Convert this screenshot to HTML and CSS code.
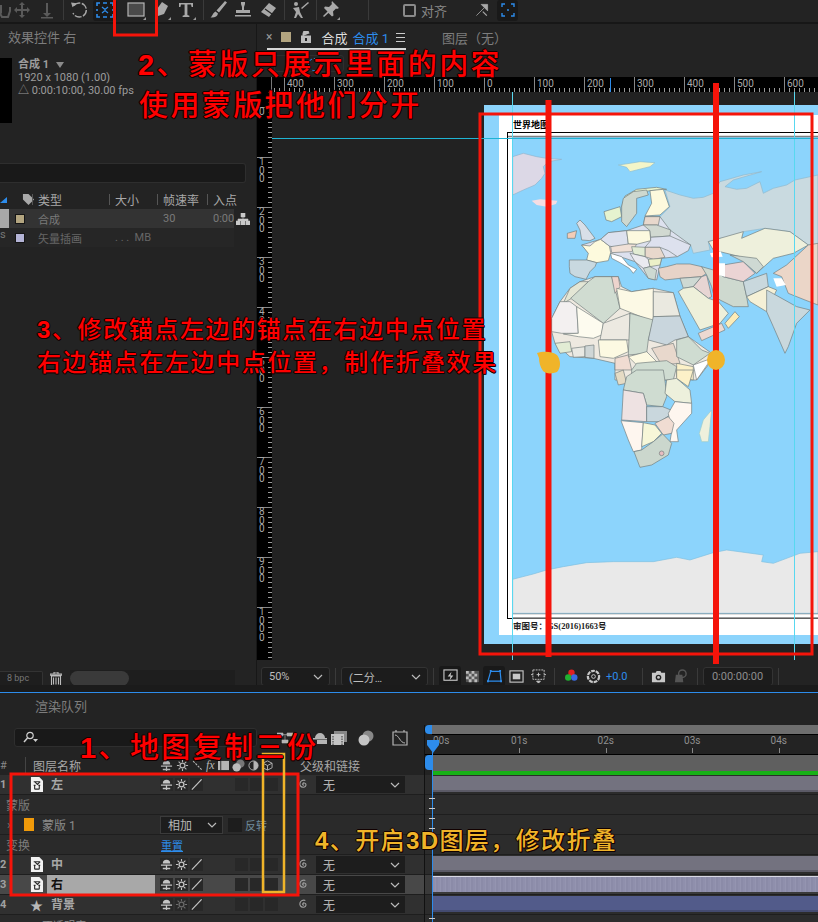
FILE: index.html
```html
<!DOCTYPE html>
<html lang="zh-CN">
<head>
    <meta charset="UTF-8">
    <title>合成 1</title>
    <link rel="stylesheet" href="styles.css">
</head>
<body>
<svg class="defs" width="0" height="0">
    <symbol id="i-shy" viewBox="0 0 14 14"><path d="M3 6a4 4 0 0 1 8 0H3zM1 7h12v1.400H1zM6.300 8.400h1.400V13H6.300zM3 10.500h8V12H3z" fill="currentColor"/></symbol>
    <symbol id="i-sun" viewBox="0 0 14 14"><circle cx="7" cy="7" r="2.600" fill="none" stroke="currentColor" stroke-width="1.400"/><path d="M7 1v2.400M7 10.600V13M1 7h2.400M10.600 7H13M2.800 2.800l1.700 1.700M9.500 9.500l1.700 1.700M11.200 2.800L9.500 4.500M4.500 9.500l-1.700 1.700" stroke="currentColor" stroke-width="1.200"/></symbol>
    <symbol id="i-slash" viewBox="0 0 14 14"><path d="M2 12.500L12.500 1.500" stroke="currentColor" stroke-width="1.300"/></symbol>
    <symbol id="i-spiral" viewBox="0 0 14 14"><path d="M7.600 7.400c-.9.6-1.900-.2-1.400-1.300.6-1.200 2.700-1 3.300.4.700 1.800-.9 3.700-3 3.500C4 9.700 2.600 7.700 3.200 5.400 3.900 2.900 6.700 1.700 9 2.600" fill="none" stroke="currentColor" stroke-width="1.200"/></symbol>
    <symbol id="i-file" viewBox="0 0 14 16"><path d="M1 0h9l4 4v12H1z" fill="#f2f2f2"/><path d="M4 5h7M5 5l3 3 3-3M4 9h2M9 9h2M5 9v4M10 9v4M5 13h5" stroke="#2a2a2a" stroke-width="1.200" fill="none"/></symbol>
    <symbol id="i-chevron" viewBox="0 0 10 6"><path d="M1 1l4 4 4-4" fill="none" stroke="currentColor" stroke-width="1.200"/></symbol>
</svg>

<div class="toolbar">
    <svg class="tool t-hand dim" viewBox="0 0 20 20"><path d="M6 5v7l-3-2 4 7h6l2-6V7" fill="none" stroke="currentColor" stroke-width="2"/></svg>
    <svg class="tool t-move dim" viewBox="0 0 20 20"><path d="M10 2l3 3h-2v4h4V7l3 3-3 3v-2h-4v4h2l-3 3-3-3h2v-4H5v2l-3-3 3-3v2h4V5H7z" fill="currentColor"/></svg>
    <svg class="tool t-down dim" viewBox="0 0 20 20"><path d="M9 3h2v10h3l-4 4-4-4h3zM4 17h12v1.500H4z" fill="currentColor"/></svg>
    <i class="sep s-a"></i>
    <svg class="tool t-rotate" viewBox="0 0 20 20"><path d="M5 5.500A7 7 0 1 1 4 13" fill="none" stroke="currentColor" stroke-width="1.400" stroke-dasharray="7 1.500"/><path d="M2 2.500l6 .8-4.500 4z" fill="currentColor"/></svg>
    <span class="tool-on t-select"><svg viewBox="0 0 18 16" width="18" height="16"><path d="M1 4V1h3M7 1h4M14 1h3v3M17 7v2M17 12v3h-3M11 15H7M4 15H1v-3M1 9V7" fill="none" stroke="#2d8ceb" stroke-width="1.600"/><path d="M6 5l3 2.500L12 5M6 11l3-2.500 3 2.500" fill="none" stroke="#2d8ceb" stroke-width="1.200"/></svg></span>
    <svg class="tool t-rect" viewBox="0 0 20 20"><rect x="2" y="3" width="16" height="13" fill="#4a4a4a" stroke="#b5b5b5" stroke-width="1.200"/><path d="M20 17v3h-3z" fill="#9a9a9a"/></svg>
    <svg class="tool t-pen" viewBox="0 0 20 20"><path d="M11 2l6 4-4 8-6 2-2 3-1-1 2-3 0-6z" fill="currentColor"/><path d="M20 17v3h-3z" fill="#9a9a9a"/></svg>
    <svg class="tool t-type" viewBox="0 0 20 20"><path d="M3 3h14v4h-1.400l-.6-2.400h-3.600V15l2 .8V17H6.600v-1.200l2-.8V4.600H5L4.400 7H3z" fill="currentColor"/><path d="M20 17v3h-3z" fill="#9a9a9a"/></svg>
    <i class="sep s-b"></i>
    <svg class="tool t-brush" viewBox="0 0 20 20"><path d="M17 1l2 1.500-8 10-2.500-2zM7.500 11.500l2.500 2c-.5 3-3.500 4.500-7.500 4 2-1 2-4.500 5-6z" fill="currentColor"/></svg>
    <svg class="tool t-stamp" viewBox="0 0 20 20"><path d="M8 2h4v2l-1 3v3h6v3H3v-3h6V7L8 4zM2 15h16v1.500H2z" fill="currentColor"/></svg>
    <svg class="tool t-eraser" viewBox="0 0 20 20"><path d="M11 3l7 5-7 9-8-5z" fill="currentColor"/><path d="M7 9l7 5" stroke="#232323" stroke-width="1.200"/></svg>
    <i class="sep s-c"></i>
    <svg class="tool t-puppet" viewBox="0 0 20 20"><circle cx="6" cy="4" r="2" fill="currentColor"/><path d="M3 8l6-1 1 5 3 6h-2l-3-4-2 4H4l2-6zM18 2l1 1-7 6-1-1z" fill="currentColor"/></svg>
    <i class="sep s-d"></i>
    <svg class="tool t-pin" viewBox="0 0 20 20"><path d="M12 1l7 7-2 1-1-.5-3 3 .5 4-1.500 1-3.500-3.500L4 17l-1-1 4.500-4.500L4 8l1-1.500 4 .5 3-3-.5-1z" fill="currentColor"/><path d="M20 17v3h-3z" fill="#9a9a9a"/></svg>
    <i class="sep s-e"></i>
    <i class="snap-box"></i>
    <span class="snap-label">对齐</span>
    <svg class="tool t-snap" viewBox="0 0 20 20"><path d="M3 17L13 7M9 3h8v8z" fill="currentColor" stroke="currentColor"/><path d="M11 12l5 5" stroke="currentColor" stroke-width="1.500"/></svg>
    <span class="tool-on t-snap-on"><svg viewBox="0 0 14 14" width="14" height="14"><path d="M1 4V1h3M10 1h3v3M13 10v3h-3M4 13H1v-3" fill="none" stroke="#2d8ceb" stroke-width="1.400"/><circle cx="7" cy="7" r="1" fill="#2d8ceb"/></svg></span>
</div>

<div class="workspace">
    <section class="project">
        <div class="tab-title project-tab">效果控件 右</div>
        <div class="comp-info">
            <div class="thumb"></div>
            <div class="comp-meta">
                <div class="comp-name">合成 1 <b class="caret"></b></div>
                <div>1920 x 1080 (1.00)</div>
                <div>△ 0:00:10:00, 30.00 fps</div>
            </div>
        </div>
        <div class="project-search"></div>
        <div class="project-head">
            <b class="sort-mark"></b>
            <svg class="tag" viewBox="0 0 14 14"><path d="M1 1h6l6 6-6 6-6-6z" fill="#a9a9a9"/></svg>
            <span class="col-type">类型</span>
            <span class="col-size">大小</span>
            <span class="col-rate">帧速率</span>
            <span class="col-in">入点</span>
        </div>
        <div class="item item-on">
            <i class="item-thumb"></i><i class="swatch swatch-comp"></i>
            <span class="col-type">合成</span><span class="col-rate">30</span><span class="col-in clip">0:00:00</span>
            <svg class="flow" viewBox="0 0 14 12"><path d="M5 0h4v4H5zM0 8h4v4H0zM5 8h4v4H5zM10 8h4v4h-4zM2 8V6h10v2M7 4v4" fill="#c9c9c9" stroke="#c9c9c9" stroke-width=".6"/></svg>
        </div>
        <div class="item">
            <i class="item-thumb item-thumb-off">s</i><i class="swatch swatch-vector"></i>
            <span class="col-type">矢量插画</span><span class="col-size">. . .&nbsp; MB</span>
        </div>
        <div class="project-foot">
            <span class="bpc">8 bpc</span>
            <svg class="trash" viewBox="0 0 12 14"><path d="M0 2h12v1.300H0zM4 0h4v2H4zM1.500 4h9v10h-9zM3.500 5.500v7M6 5.500v7M8.500 5.500v7" fill="none" stroke="#bdbdbd" stroke-width="1.100"/></svg>
            <div class="scroll-track"><i class="scroll-thumb"></i></div>
        </div>
    </section>

    <section class="viewer">
        <div class="viewer-tabs">
            <span class="close">×</span>
            <i class="tab-swatch"></i>
            <svg class="lock" viewBox="0 0 10 12"><path d="M0 5h10v7H0zM2 5V2.500a3 3 0 0 1 6 0" fill="#bdbdbd" stroke="#bdbdbd"/><rect x="4" y="7" width="2" height="3" fill="#232323"/></svg>
            <span class="tab-active">合成<em>合成 1</em></span>
            <span class="menu"></span>
            <span class="tab-title tab-layer">图层（无）</span>
        </div>
        <div class="viewer-strip"><i class="strip-pill"></i></div>
        <div class="ruler-row">
            <i class="ruler-corner"></i>
            <div class="ruler-top">
                <span>400</span><span>300</span><span>200</span><span>100</span><span>0</span><span>100</span><span>200</span><span>300</span><span>400</span><span>500</span><span>600</span>
            </div>
        </div>
        <div class="stage">
            <div class="ruler-left">
                <span>0</span><span>1<br>0<br>0</span><span>2<br>0<br>0</span><span>3<br>0<br>0</span><span>4<br>0<br>0</span><span>5<br>0<br>0</span><span>6<br>0<br>0</span><span>7<br>0<br>0</span><span>8<br>0<br>0</span><span>9<br>0<br>0</span><span>1<br>0<br>0<br>0</span>
            </div>
            <div class="canvas">
                <svg class="map" width="334" height="539" viewBox="484 105 334 539">
                    <rect x="484" y="105" width="334" height="539" fill="#8cd4fc"/>
                    <rect x="499" y="115" width="319" height="520" fill="#fff"/>
                    <rect x="507.500" y="132.500" width="320" height="486" fill="none" stroke="#000"/>
                    <rect x="512" y="136" width="310" height="477" fill="#8cd4fc"/>
                    <path d="M508 136.500h310M512 613.500h306M512 618h306" stroke="#808080" stroke-width="1.300"/>
                    <text class="map-title" x="513" y="128">世界地图</text>
                    <text class="map-note" x="513" y="629">审图号：GS(2016)1663号</text>
                    <g transform="translate(480 110) scale(.3333)" stroke="#717c7c" stroke-width="2" stroke-linejoin="round">
                        <!-- north -->
                        <path fill="#dcd8e6" stroke="#8fb4cc" d="M98 140L130 130 170 140 200 145 245 148 205 155 190 170 195 190 185 205 165 225 130 240 98 255Z"/>
                        <path fill="#f5dde3" stroke="none" d="M155 272L180 268 232 272 228 282 200 290 170 285Z"/>
                        <path fill="#f4f5c8" stroke="#8bbcd0" d="M415 165L450 160 480 155 525 158 510 170 470 180 450 185 440 172Z"/>
                        <path fill="#c9dae0" stroke="#8fb8cc" d="M555 240L600 255 640 265 670 262 700 250 720 215 790 195 845 185 760 210 735 230 770 238 800 235 840 215 850 250 880 235 920 225 945 210 1014 195V405L985 405 930 365 855 355 790 365 785 385 720 385 685 395 690 420 640 430 632 405 590 380 570 360 540 345 540 320 570 290Z"/>
                        <path fill="#e6f3cf" d="M372 305L420 290 425 320 395 335 378 330Z"/>
                        <path fill="#e6f3cf" d="M425 290L435 258 470 238 530 232 560 238 510 242 470 250 440 270Z"/>
                        <path fill="#ced8cf" d="M425 290L430 265 460 245 500 240 505 255 470 265 470 310 440 350 425 335Z"/>
                        <path fill="#fdf9dd" d="M510 242L550 238 568 290 540 315 495 318 515 280Z"/>
                        <path fill="#d8dfe8" d="M290 340L300 330 315 345 345 385 330 392 305 390 300 360Z"/>
                        <path fill="#f3cdb8" d="M262 370L290 362 285 385 262 385Z"/>
                        <!-- europe -->
                        <path fill="#dde1ee" d="M305 405L362 388 385 368 440 362 490 345 495 320 540 320 570 360 632 405 592 440 545 445 530 510 505 505 465 455 390 430 350 458Z"/>
                        <path fill="#fdfadd" d="M305 405L330 408 345 395 362 388 388 408 392 428 385 452 350 458 320 450 325 430Z"/>
                        <path fill="#c9d9e0" d="M268 450L320 450 350 458 345 470 330 485 318 508 285 500 270 490 268 470Z"/>
                        <path fill="#dde1ee" d="M385 368L440 362 445 402 425 418 388 408 362 388Z"/>
                        <path fill="#fcf9df" d="M440 362L510 362 512 392 470 403 445 402Z"/>
                        <path fill="#f0e0d6" d="M392 410L445 402 470 403 455 425 395 428Z"/>
                        <path fill="#e8d8cc" d="M495 320L540 320 535 345 490 345Z"/>
                        <path fill="#d1d9d1" d="M490 345L530 345 572 360 570 378 512 382 510 362Z"/>
                        <path fill="#dde1ee" d="M512 382L570 378 632 405 625 422 592 440 565 422 540 412 495 412 512 392Z"/>
                        <path fill="#e8d8cc" d="M495 412L540 412 555 442 520 448 495 440Z"/>
                        <path fill="#e2ecd4" d="M455 410L495 412 495 440 460 432Z"/>
                        <path fill="#eaeaf0" d="M450 430L460 432 495 440 505 448 510 470 490 475 465 455Z"/>
                        <path fill="#ecf0c8" d="M505 448L545 445 540 465 510 470Z"/>
                        <path fill="#cdd9d2" d="M490 475L510 470 530 480 525 510 505 505Z"/>
                        <path fill="#fff" d="M392 430L425 440 445 465 470 478 460 490 448 475 420 458 395 445Z"/>
                        <!-- asia -->
                        <path fill="#e7d3c8" d="M535 475L560 470 590 462 630 462 665 470 680 490 665 500 600 505 555 510 540 500Z"/>
                        <path fill="#ced9d3" d="M600 505L665 500 640 530 610 535Z"/>
                        <path fill="#e7d5d3" d="M640 530L665 500 680 495 695 560 685 565Z"/>
                        <path fill="#eef0da" d="M595 545L610 535 640 530 685 565 715 575 745 610 720 640 660 660Z"/>
                        <path fill="#ced9cf" d="M665 470L700 480 730 500 790 515 800 560 805 590 760 590 720 570 700 550 695 530 680 495Z"/>
                        <path fill="#fcecb8" d="M735 640L765 605 778 620 745 655Z"/>
                        <path fill="#edd9d1" d="M655 670L725 640 735 660 665 692Z"/>
                        <path fill="#eef0dc" d="M685 395L790 365 785 385 855 355 930 365 985 405 940 430 880 445 830 490 780 440 700 420Z"/>
                        <path fill="#ebd4d4" d="M730 465L790 455 825 490 790 515 730 500Z"/>
                        <path fill="#ced9d3" d="M750 435L830 445 850 470 830 490 790 455Z"/>
                        <path fill="#c9d8dd" d="M790 515L860 490 865 530 800 560Z"/>
                        <path fill="#f5f0d6" d="M800 560L865 530 890 540 860 605 810 575Z"/>
                        <path fill="#c9d8dd" d="M860 540L950 590 990 600 950 640 925 710 915 730 880 650 860 605Z"/>
                        <path fill="#ebd6c8" d="M880 490L920 465 985 405 1014 400V585L975 570 925 550 905 500Z"/>
                        <path fill="#fff" stroke="none" d="M880 505L905 505 918 525 890 530Z"/>
                        <path fill="#fff" stroke="none" d="M715 460L735 460 735 500 715 495Z"/>
                        <path fill="#fff" stroke="none" d="M690 430L722 424 728 440 695 442Z"/>
                        <!-- africa -->
                        <path fill="#eee9e0" d="M215 625L240 575 270 535 300 515 345 500 415 500 425 530 455 545 520 535 580 548 600 620 625 680 695 730 700 745 650 810H405V760L340 745 270 740 225 700 215 665Z"/>
                        <path fill="#e3e6d5" d="M250 580L270 535 300 515 325 515 275 565Z"/>
                        <path fill="#d0dcd1" d="M272 565L325 515 345 500 395 500 405 535 420 595 370 640Z"/>
                        <path fill="#edd4cd" d="M395 500L415 500 420 530 405 550Z"/>
                        <path fill="#fcf9e5" d="M410 535L455 545 520 535 520 635 420 595Z"/>
                        <path fill="#eae9e0" d="M520 545L580 548 600 618 520 620Z"/>
                        <path fill="#f3f0f0" d="M215 625L240 575 270 575 290 590 295 670 245 670 215 665Z"/>
                        <path fill="#fdfbef" d="M290 590L370 640 365 675 340 685 295 680 250 672 295 670Z"/>
                        <path fill="#ece9e1" d="M370 640L450 610 450 690 360 690Z"/>
                        <path fill="#cfdcd1" d="M450 610L520 630 505 690 500 730 445 735Z"/>
                        <path fill="#c9d6dd" d="M520 620L600 618 625 680 585 690 560 705 505 690Z"/>
                        <path fill="#fcf9e2" d="M355 690L440 690 445 725 400 745 360 740Z"/>
                        <path fill="#e2ecd4" d="M225 700L270 695 275 725 240 730Z"/>
                        <path fill="#e9e9e3" d="M275 715L315 710 315 740 280 742Z"/>
                        <path fill="#cfd6d6" d="M315 708L342 705 342 745 315 742Z"/>
                        <path fill="#f0dcd2" d="M405 745L445 735 455 780 405 780Z"/>
                        <path fill="#fcf9e2" d="M445 740L500 725 535 760 470 765Z"/>
                        <path fill="#e8d8cc" d="M515 715L580 700 600 760 545 765Z"/>
                        <path fill="#cfdcd1" d="M590 690L625 680 665 720 690 730 640 765 590 740Z"/>
                        <path fill="#fcf1c8" d="M590 760L640 770 640 810 590 800Z"/>
                        <path fill="#fff" d="M640 765L695 745 650 810Z"/>
                        <path fill="#cfdcd1" d="M455 780L470 760 560 752 590 770 580 810H455Z"/>
                    </g>
                    <g transform="translate(480 370) scale(.3333)" stroke="#717c7c" stroke-width="2" stroke-linejoin="round">
                        <path fill="#e5dbc4" d="M405 10L430 0 440 40 415 45Z"/>
                        <path fill="#cfdcd1" d="M470 0L550 0 556 40 560 80 548 110 500 105 490 70 430 60 440 20Z"/>
                        <path fill="#edf0dc" d="M560 30L590 25 630 60 635 100 585 95 555 70Z"/>
                        <path fill="#fcf1c8" d="M590 0L640 0 625 50 590 25Z"/>
                        <path fill="#eee2e2" d="M430 60L490 70 500 105 500 155 425 150Z"/>
                        <path fill="#c9d7dd" d="M500 110L548 110 585 125 540 155 500 155Z"/>
                        <path fill="#fef6ef" d="M585 95L635 100 635 130 590 180 595 215 570 215 575 185 565 130Z"/>
                        <path fill="#fef6ef" d="M423 152L490 158 485 240 460 245 445 210Z"/>
                        <path fill="#f7f7d8" d="M490 158L525 165 545 190 520 215 485 230Z"/>
                        <path fill="#f0dcd2" d="M525 160L565 140 582 160 575 190 550 195Z"/>
                        <path fill="#cbd7cd" d="M462 245L485 240 520 215 548 192 575 220 565 255 515 285 480 292Z"/>
                        <circle cx="545" cy="250" r="7" fill="#e8bcc0"/>
                        <path fill="#eef0dc" stroke="#9cc" d="M695 120L690 170 685 215 665 215 658 190 670 150Z"/>
                        <path fill="#e9e9e9" stroke="#7fbfe0" d="M98 628L160 612 200 600 250 590 320 578 400 575 520 575 590 562 630 570 700 548 740 540 850 555 845 575 880 580 960 550 1014 545V730H98Z"/>
                    </g>
                </svg>
            </div>
        </div>
        <div class="viewer-foot">
            <span class="drop drop-zoom">50%<svg class="chev"><use href="#i-chevron"/></svg></span>
            <i class="vsep"></i>
            <span class="drop drop-res">(二分…<svg class="chev"><use href="#i-chevron"/></svg></span>
            <i class="vsep"></i>
            <span class="foot-btn foot-on"><svg viewBox="0 0 16 16"><rect x="1" y="1" width="14" height="11" fill="none" stroke="currentColor" stroke-width="1.200"/><path d="M9 3L5 8h3l-1 4 4-5H8z" fill="currentColor"/></svg></span>
            <span class="foot-btn"><svg viewBox="0 0 16 16"><rect x="1" y="2" width="14" height="12" fill="#555"/><path d="M1 2h3v3H1zM7 2h3v3H7zM4 5h3v3H4zM10 5h3v3h-3zM1 8h3v3H1zM7 8h3v3H7zM4 11h3v3H4zM10 11h3v3h-3z" fill="#bbb"/></svg></span>
            <span class="foot-btn foot-on"><svg viewBox="0 0 16 16"><path d="M4 2.500h10L15 13H1z" fill="none" stroke="#2d8ceb" stroke-width="1.300"/><path d="M3 1h2v2H3zM13 1h2v2h-2zM0 12h2v2H0zM14 12h2v2h-2z" fill="#2d8ceb"/></svg></span>
            <span class="foot-btn"><svg viewBox="0 0 16 16"><rect x="1" y="2" width="14" height="12" fill="none" stroke="currentColor" stroke-width="1.200"/><rect x="4" y="5" width="8" height="6" fill="currentColor"/></svg></span>
            <span class="foot-btn"><svg viewBox="0 0 16 16"><path d="M2 1h12v10H2z" fill="none" stroke="currentColor" stroke-dasharray="2 1"/><path d="M8 4v4M6 6h4M0 6h2M14 6h2M6 13h4l-2 2z" stroke="currentColor" fill="currentColor"/></svg></span>
            <i class="vsep"></i>
            <span class="foot-btn rgb"><svg viewBox="0 0 16 16"><circle cx="8" cy="4" r="3.400" fill="#e02020"/><circle cx="4.500" cy="9" r="3.400" fill="#20b030"/><circle cx="11" cy="9" r="3.400" fill="#3a6ae0"/></svg></span>
            <span class="foot-btn"><svg viewBox="0 0 16 16"><circle cx="8" cy="8" r="6" fill="none" stroke="currentColor" stroke-width="2.400" stroke-dasharray="4 1"/><circle cx="8" cy="8" r="2" fill="none" stroke="currentColor"/></svg></span>
            <span class="exposure">+0.0</span>
            <i class="vsep vsep-c"></i>
            <span class="foot-btn"><svg viewBox="0 0 16 16"><path d="M1 4h4l1-2h4l1 2h4v10H1z" fill="currentColor"/><circle cx="8" cy="9" r="3" fill="#232323"/><circle cx="8" cy="9" r="1.500" fill="currentColor"/></svg></span>
            <span class="foot-btn dim"><svg viewBox="0 0 16 16"><path d="M3 6h7l1 8H2z" fill="currentColor"/><circle cx="10" cy="5" r="4" fill="none" stroke="currentColor" stroke-width="1.500"/></svg></span>
            <i class="vsep"></i>
            <span class="timecode">0:00:00:00</span>
            <i class="vsep"></i>
        </div>
    </section>
</div>

<div class="blue-rule"></div>

<section class="timeline">
    <div class="timeline-tab"><span class="tab-title">渲染队列</span></div>
    <div class="timeline-body">
        <div class="layers">
            <div class="search-row">
                <div class="layer-search"><svg viewBox="0 0 16 12"><circle cx="8" cy="4.500" r="3.200" fill="none" stroke="#cfcfcf" stroke-width="1.200"/><path d="M5.500 7L2 11" stroke="#cfcfcf" stroke-width="1.500"/><path d="M11 8h5l-2.500 3z" fill="#cfcfcf"/></svg></div>
                <svg class="sw-icon ic-flow" viewBox="0 0 16 16"><path d="M0 3h6v3H0zM10 3h6v3h-6zM5 10h6v3H5zM6 4.500h4M8 5v5" fill="#b5b5b5" stroke="#b5b5b5" stroke-width=".6"/></svg>
                <svg class="sw-icon ic-shy" viewBox="0 0 16 16"><path d="M3 8a5 5 0 0 1 10 0zM1 8h14v1.500H1zM5 10h10v4H5z" fill="#b5b5b5"/></svg>
                <svg class="sw-icon ic-film" viewBox="0 0 16 16"><rect x="3" y="1" width="13" height="11" fill="#888"/><rect x="0" y="4" width="13" height="11" fill="#c4c4c4"/><path d="M2 6v9M11 6v9" stroke="#333" stroke-dasharray="1.500 1"/></svg>
                <svg class="sw-icon ic-discs" viewBox="0 0 16 16"><circle cx="10" cy="6" r="5.500" fill="#888"/><circle cx="6" cy="10" r="5.500" fill="#c4c4c4"/></svg>
                <svg class="sw-icon ic-graph" viewBox="0 0 16 16"><path d="M1 2h14v13H1zM4 0v2M12 0v2" fill="none" stroke="#b5b5b5" stroke-width="1.200"/><path d="M3 5c4 0 5 8 10 8" fill="none" stroke="#b5b5b5"/></svg>
            </div>
            <div class="layer-head">
                <span class="hash">#</span>
                <span class="head-name">图层名称</span>
                <span class="head-icons">
                    <svg class="sw-plain"><use href="#i-shy"/></svg>
                    <svg class="sw-plain"><use href="#i-sun"/></svg>
                    <svg class="sw-small" viewBox="0 0 10 10"><path d="M1 1l8 8" stroke="currentColor" stroke-dasharray="2 1"/></svg>
                    <span class="fx">fx</span>
                    <svg class="sw-small" viewBox="0 0 12 12"><rect x="0" y="1" width="12" height="10" fill="currentColor"/><path d="M3 1v10" stroke="#232323"/></svg>
                    <svg class="sw-plain" viewBox="0 0 14 14"><circle cx="9" cy="5" r="4.500" fill="#777"/><circle cx="5" cy="9" r="4.500" fill="#bbb"/></svg>
                    <svg class="sw-small" viewBox="0 0 12 12"><circle cx="6" cy="6" r="5" fill="none" stroke="currentColor"/><path d="M6 1a5 5 0 0 1 0 10z" fill="currentColor"/></svg>
                    <svg class="sw-small" viewBox="0 0 12 12"><path d="M6 1l5 2.500v5L6 11 1 8.500v-5zM1 3.500L6 6l5-2.500M6 6v5" fill="none" stroke="currentColor"/></svg>
                </span>
                <span class="head-parent">父级和链接</span>
            </div>

            <div class="row row-layer">
                <span class="num">1</span><svg class="file"><use href="#i-file"/></svg><span class="layer-name">左</span>
                <span class="switches"><i><svg><use href="#i-shy"/></svg></i><i><svg><use href="#i-sun"/></svg></i><i><svg><use href="#i-slash"/></svg></i></span>
                <span class="flags"><i></i><i></i><i></i></span>
                <svg class="spiral"><use href="#i-spiral"/></svg>
                <span class="parent">无<svg class="chev"><use href="#i-chevron"/></svg></span>
            </div>
            <div class="row row-group"><span class="group-name">蒙版</span></div>
            <div class="row row-group">
                <span class="twirl">›</span><i class="mask-swatch"></i><span class="mask-name">蒙版 1</span>
                <span class="mode">相加<svg class="chev"><use href="#i-chevron"/></svg></span>
                <i class="invert"></i><span class="invert-label">反转</span>
            </div>
            <div class="row row-group"><span class="group-name">变换</span><span class="reset">重置</span></div>
            <div class="row row-layer">
                <span class="num">2</span><svg class="file"><use href="#i-file"/></svg><span class="layer-name">中</span>
                <span class="switches"><i><svg><use href="#i-shy"/></svg></i><i><svg><use href="#i-sun"/></svg></i><i><svg><use href="#i-slash"/></svg></i></span>
                <span class="flags"><i></i><i></i><i></i></span>
                <svg class="spiral"><use href="#i-spiral"/></svg>
                <span class="parent">无<svg class="chev"><use href="#i-chevron"/></svg></span>
            </div>
            <div class="row row-layer row-selected">
                <span class="num">3</span><svg class="file"><use href="#i-file"/></svg><span class="layer-name name-edit">右</span>
                <span class="switches"><i><svg><use href="#i-shy"/></svg></i><i><svg><use href="#i-sun"/></svg></i><i><svg><use href="#i-slash"/></svg></i></span>
                <span class="flags"><i></i><i></i><i></i></span>
                <svg class="spiral"><use href="#i-spiral"/></svg>
                <span class="parent">无<svg class="chev"><use href="#i-chevron"/></svg></span>
            </div>
            <div class="row row-layer">
                <span class="num">4</span><span class="star">★</span><span class="layer-name">背景</span>
                <span class="switches"><i><svg><use href="#i-shy"/></svg></i><i class="dim"><svg><use href="#i-sun"/></svg></i><i><svg><use href="#i-slash"/></svg></i></span>
                <span class="flags"><i></i><i></i><i></i></span>
                <svg class="spiral"><use href="#i-spiral"/></svg>
                <span class="parent">无<svg class="chev"><use href="#i-chevron"/></svg></span>
            </div>
            <div class="row row-group"><span class="opacity-name">不透明度</span></div>
        </div>

        <div class="tracks">
            <div class="nav-bar"><i class="nav-handle"></i></div>
            <div class="time-ruler">
                <span>00s</span><span>01s</span><span>02s</span><span>03s</span><span>04s</span>
            </div>
            <div class="work-bar"><i class="work-handle"></i></div>
            <div class="green-bar"></div>
            <div class="track"><i class="clip-bar"></i></div>
            <div class="track"><b class="key"></b></div>
            <div class="track"><b class="key"></b></div>
            <div class="track"></div>
            <div class="track"><i class="clip-bar"></i></div>
            <div class="track track-selected"><i class="clip-bar clip-noise"></i></div>
            <div class="track"><i class="clip-bar clip-bg"></i></div>
            <div class="track"><b class="key"></b></div>
            <svg class="cti" width="12" height="13" viewBox="0 0 12 13"><path d="M0 0h12v5l-6 8-6-8z" fill="#2d8ceb"/></svg>
            <i class="playhead"></i>
        </div>
    </div>
</section>

<svg class="marks" viewBox="0 0 818 922" width="818" height="922">
    <path d="M512.500 92V660M794.500 92V660" stroke="#58d8f0" fill="none"/>
    <path d="M272 138.500H818" stroke="#1fb4d4"/>
    <path d="M610.500 78V92" stroke="#2d8ceb"/>
    <g fill="none" stroke="#f5140a">
        <rect x="114.500" y="-3" width="42" height="38" stroke-width="3"/>
        <rect x="480" y="114" width="332" height="540" stroke-width="3"/>
        <rect x="11" y="774" width="287" height="121" stroke-width="3"/>
        <path d="M548.500 100V657M716 83V664" stroke-width="6"/>
    </g>
    <rect x="263" y="754" width="21" height="138" fill="none" stroke="#f0b429" stroke-width="2.500"/>
    <path d="M537 353c6-2 15-2 20 2 4 5 4 13 0 17-5 2-11 2-14-1-3-4-4-9-4-13z" fill="#f0b429"/>
    <ellipse cx="716" cy="360" rx="9" ry="10" fill="#f0b429"/>
</svg>

<div class="note note-two">
    <div><b>2</b>、蒙版只展示里面的内容</div>
    <div class="note-line">使用蒙版把他们分开</div>
</div>
<div class="note note-three">
    <div><b>3</b>、修改锚点左边的锚点在右边中点位置</div>
    <div>右边锚点在左边中点位置，制作折叠效果</div>
</div>
<div class="note note-one"><b>1</b>、地图复制三份</div>
<div class="note note-four"><b>4</b>、开启<b>3D</b>图层，修改折叠</div>
</body>
</html>
```

FILE: styles.css
```css
* {
    box-sizing: border-box;
}
body {
    margin: 0;
    width: 818px;
    height: 922px;
    overflow: hidden;
    position: relative;
    background: #232323;
    color: #9a9a9a;
    font-family: Roboto, "Noto Sans CJK SC", sans-serif;
    font-size: 12px;
}
i, em {
    font-style: normal;
}
.defs {
    position: absolute;
}
.dim {
    color: #5a5a5a;
}

/* top tool bar */
.toolbar {
    display: flex;
    align-items: center;
    height: 24px;
    padding-bottom: 2px;
    background: #232323;
    border-bottom: 2px solid #171717;
    color: #a8a8a8;
    overflow: hidden;
}
.tool {
    flex: none;
    width: 20px;
    height: 20px;
}
.sep {
    flex: none;
    width: 1px;
    height: 20px;
    background: #3a3a3a;
}
.tool-on {
    flex: none;
    display: flex;
    align-items: center;
    justify-content: center;
    height: 21px;
    background: #191919;
    border-radius: 3px;
}
.t-hand { margin-left: -5px; }
.t-move { margin-left: -3px; }
.t-down { margin-left: 5px; }
.s-a { margin-left: 6px; }
.t-rotate { margin-left: 5px; }
.t-select { width: 24px; margin-left: 4px; }
.t-rect { margin-left: 9px; }
.t-pen { margin-left: 5px; }
.t-type { margin-left: 5px; }
.s-b { margin-left: 7px; }
.t-brush { margin-left: 4px; }
.t-stamp { margin-left: 5px; }
.t-eraser { margin-left: 5px; }
.s-c { margin-left: 6px; }
.t-puppet { margin-left: 5px; }
.s-d { margin-left: 6px; }
.t-pin { margin-left: 3px; }
.s-e { margin-left: 28px; }
.snap-box {
    flex: none;
    width: 13px;
    height: 13px;
    margin-left: 34px;
    border: 2px solid #8a8a8a;
    border-radius: 2px;
}
.snap-label {
    margin-left: 5px;
    width: 44px;
    font-size: 13px;
    color: #888;
}
.t-snap {
    width: 16px;
    height: 16px;
    margin-left: 9px;
}
.t-snap-on {
    width: 21px;
    margin-left: 7px;
}

/* upper panels */
.workspace {
    display: flex;
    height: 664px;
}
.tab-title {
    color: #7d7d7d;
    font-size: 13px;
}
.project {
    flex: none;
    display: flex;
    flex-direction: column;
    width: 257px;
    border-right: 1px solid #171717;
}
.project-tab {
    height: 26px;
    padding: 3px 0 0 8px;
}
.comp-info {
    display: flex;
    height: 113px;
    padding-top: 8px;
}
.thumb {
    width: 12px;
    height: 65px;
    background: #000;
}
.comp-meta {
    margin-left: 6px;
    font-size: 11px;
    line-height: 13px;
    color: #9c9c9c;
}
.comp-name {
    font-weight: 700;
}
.caret {
    display: inline-block;
    margin-left: 4px;
    border: 4px solid transparent;
    border-top: 6px solid #8a8a8a;
    border-bottom: 0;
}
.project-search {
    width: 246px;
    height: 20px;
    background: #191919;
    border: 1px solid #2e2e2e;
    border-left: 0;
    border-radius: 0 3px 3px 0;
}
.project-head, .item {
    display: flex;
    align-items: center;
    position: relative;
}
.project-head {
    height: 19px;
    margin-top: 7px;
    color: #a8a8a8;
}
.project-head .col-type::before, .project-head .col-size::before, .project-head .col-rate::before, .project-head .col-in::before {
    content: "";
    position: absolute;
    left: -6px;
    top: 3px;
    width: 1px;
    height: 11px;
    background: #555;
}
.sort-mark {
    width: 0;
    margin-right: 15px;
    border-left: 7px solid transparent;
    border-bottom: 6px solid #2d8ceb;
}
.tag {
    width: 13px;
    height: 13px;
    margin-right: 10px;
}
.col-type {
    position: absolute;
    left: 38px;
}
.col-size {
    position: absolute;
    left: 115px;
}
.col-rate {
    position: absolute;
    left: 163px;
}
.col-in {
    position: absolute;
    left: 213px;
}
.clip {
    width: 21px;
    overflow: hidden;
    white-space: nowrap;
}
.item {
    width: 234px;
    height: 19px;
    background: #262626;
    color: #666;
    font-size: 11px;
}
.item-on {
    background: #333;
    color: #7a7a7a;
}
.item-thumb {
    width: 9px;
    height: 100%;
    background: #a8a8a8;
}
.item-thumb-off {
    background: none;
    color: #777;
}
.swatch {
    width: 10px;
    height: 10px;
    margin-left: 6px;
    border: 1px solid #151515;
}
.swatch-comp {
    background: #b3a580;
}
.swatch-vector {
    background: #b4b4d6;
}
.flow {
    position: absolute;
    left: 236px;
    width: 14px;
    height: 12px;
}
.project-foot {
    display: flex;
    align-items: center;
    height: 19px;
    margin-top: auto;
}
.bpc {
    width: 43px;
    height: 15px;
    padding-left: 7px;
    border: 1px solid #333;
    border-left: 0;
    border-radius: 0 2px 2px 0;
    background: #1e1e1e;
    color: #777;
    font-size: 9px;
    line-height: 13px;
}
.trash {
    width: 12px;
    height: 14px;
    margin-left: 7px;
}
.scroll-track {
    width: 165px;
    height: 17px;
    margin-left: 8px;
    padding-top: 1px;
    background: #1e1e1e;
}
.scroll-thumb {
    display: block;
    width: 59px;
    height: 15px;
    border-radius: 8px;
    background: #3a3a3a;
}

/* composition viewer */
.viewer {
    flex: 1;
    display: flex;
    flex-direction: column;
    min-width: 0;
    overflow: hidden;
}
.viewer-tabs {
    flex: none;
    display: flex;
    align-items: center;
    height: 26px;
    color: #ddd;
}
.close {
    margin-left: 9px;
    color: #999;
    font-size: 12px;
}
.tab-swatch {
    width: 10px;
    height: 10px;
    margin-left: 9px;
    background: #b3a580;
}
.lock {
    width: 10px;
    height: 12px;
    margin-left: 10px;
}
.tab-active {
    margin-left: 10px;
    font-size: 13px;
    white-space: nowrap;
}
.tab-active em {
    margin-left: 5px;
    color: #2d8ceb;
}
.menu {
    width: 9px;
    height: 9px;
    margin-left: 7px;
    border-top: 1px solid #ccc;
    border-bottom: 1px solid #ccc;
    background: linear-gradient(#ccc, #ccc) center / 100% 1px no-repeat;
}
.tab-layer {
    margin-left: 37px;
    white-space: nowrap;
}
.viewer-strip {
    flex: none;
    height: 27px;
    padding: 5px 0 0 17px;
    position: relative;
}
.viewer-strip::before {
    content: "";
    position: absolute;
    left: 10px;
    top: -2px;
    width: 139px;
    height: 2px;
    background: #d8d8d8;
}
.strip-pill {
    display: block;
    width: 70px;
    height: 17px;
    border: 1px solid #2e2e2e;
    border-radius: 3px;
    position: relative;
}
.strip-pill::after {
    content: "";
    position: absolute;
    left: 33px;
    top: 2px;
    width: 11px;
    height: 11px;
    border: 1px dashed #2d8ceb;
    border-radius: 50%;
}
.ruler-row {
    flex: none;
    display: flex;
    height: 15px;
}
.ruler-corner {
    flex: none;
    width: 15px;
    background: #000;
    border-right: 1px solid #777;
}
.ruler-top {
    flex: 1;
    display: flex;
    padding-left: 12px;
    background: #000 repeating-linear-gradient(90deg, #999 0 1px, transparent 1px 5px) 2px 100% / 100% 4px no-repeat;
    overflow: hidden;
}
.ruler-top span {
    flex: none;
    width: 50px;
    padding-left: 2px;
    border-left: 1px solid #888;
    color: #aaa;
    font-size: 10px;
    line-height: 13px;
}
.stage {
    flex: none;
    display: flex;
    height: 568px;
}
.ruler-left {
    flex: none;
    width: 15px;
    height: 568px;
    padding-top: 15px;
    background: #000 repeating-linear-gradient(180deg, #999 0 1px, transparent 1px 5px) 100% 0 / 4px 100% no-repeat;
    overflow: hidden;
}
.ruler-left span {
    display: block;
    height: 50px;
    padding-left: 2px;
    border-top: 1px solid #888;
    color: #aaa;
    font-size: 10px;
    line-height: 8.500px;
}
.canvas {
    flex: 1;
    min-width: 0;
    padding: 13px 0 0 212px;
    background: #222;
    overflow: hidden;
}
.map {
    display: block;
}
.map-title {
    font-size: 9px;
    font-weight: 700;
    fill: #000;
}
.map-note {
    font-family: "Liberation Serif", "Noto Sans CJK SC", serif;
    font-size: 8.500px;
    font-weight: 700;
    fill: #222;
}
.viewer-foot {
    flex: none;
    display: flex;
    align-items: center;
    height: 23px;
    margin-top: 5px;
    padding-left: 4px;
    color: #bdbdbd;
    font-size: 11px;
}
.drop {
    display: flex;
    align-items: center;
    justify-content: space-between;
    height: 19px;
    padding: 0 6px 0 7px;
    border: 1px solid #333;
    border-radius: 3px;
    background: #1c1c1c;
}
.drop-zoom {
    width: 69px;
}
.drop-res {
    width: 87px;
}
.chev {
    width: 10px;
    height: 6px;
    color: #bbb;
}
.vsep {
    flex: none;
    width: 1px;
    height: 18px;
    margin: 0 5px;
    background: #3a3a3a;
}
.vsep-c {
    margin: 0 5px 0 14px;
}
.foot-btn {
    flex: none;
    display: flex;
    align-items: center;
    justify-content: center;
    width: 22px;
    height: 21px;
    color: #c8c8c8;
}
.foot-btn svg {
    width: 15px;
    height: 15px;
}
.foot-btn.dim {
    color: #555;
}
.foot-on {
    background: #191919;
    border-radius: 3px;
}
.exposure {
    margin-left: 2px;
    color: #2d8ceb;
}
.timecode {
    flex: none;
    width: 70px;
    height: 19px;
    border: 1px solid #333;
    border-radius: 3px;
    background: #1c1c1c;
    color: #8d8d8d;
    line-height: 17px;
    text-align: center;
}

.blue-rule {
    height: 1px;
    margin-top: 4px;
    background: #2d8ceb;
    box-shadow: 0 -4px 0 3px #1b1b1b;
    position: relative;
}

/* timeline */
.timeline-tab {
    height: 32px;
    padding: 3px 0 0 35px;
}
.timeline-body {
    display: flex;
}
.layers {
    flex: none;
    width: 425px;
    border-right: 1px solid #111;
}
.search-row {
    display: flex;
    height: 30px;
    padding-top: 3px;
    position: relative;
}
.layer-search {
    width: 243px;
    height: 19px;
    margin-left: 14px;
    padding: 2px 0 0 7px;
    background: #191919;
    border: 1px solid #2e2e2e;
    border-radius: 3px;
}
.layer-search svg {
    width: 16px;
    height: 12px;
}
.sw-icon {
    width: 16px;
    height: 16px;
    margin-top: 2px;
}
.ic-flow { margin-left: 20px; }
.ic-shy { margin-left: 19px; }
.ic-film { margin-left: 3px; }
.ic-discs { margin-left: 11px; }
.ic-graph { margin-left: 18px; }
.layer-head {
    display: flex;
    align-items: center;
    height: 20px;
    color: #a8a8a8;
    font-size: 12px;
}
.hash {
    width: 25px;
    font-size: 11px;
    color: #888;
}
.head-name {
    width: 135px;
    padding-left: 7px;
    border-left: 1px solid #444;
    white-space: nowrap;
}
.head-icons {
    display: flex;
    align-items: center;
    gap: 3px;
    width: 135px;
    color: #b5b5b5;
}
.sw-plain {
    width: 13px;
    height: 13px;
}
.sw-small {
    width: 11px;
    height: 11px;
}
.fx {
    font-family: "Liberation Serif", serif;
    font-style: italic;
    font-size: 12px;
}
.head-parent {
    margin-left: 5px;
    white-space: nowrap;
}
.row {
    display: flex;
    align-items: center;
    height: 20px;
    border-bottom: 1px solid #1e1e1e;
    color: #8e8e8e;
    position: relative;
}
.row-layer {
    background: #303030;
}
.row-group {
    background: #2a2a2a;
}
.row-selected {
    background: #484848;
}
.num {
    width: 30px;
    color: #a0a0a0;
    font-size: 11px;
    font-weight: 700;
}
.file {
    flex: none;
    width: 13px;
    height: 15px;
}
.star {
    flex: none;
    width: 13px;
    color: #b8b8b8;
    font-size: 13px;
}
.layer-name {
    flex: none;
    width: 108px;
    height: 100%;
    margin-left: 4px;
    padding-left: 4px;
    color: #a8a8a8;
    font-weight: 700;
    line-height: 20px;
}
.name-edit {
    background: #a8a8a8;
    color: #111;
}
.switches {
    flex: none;
    display: flex;
    gap: 2px;
    margin-left: 5px;
}
.switches i {
    display: block;
    width: 13px;
    height: 13px;
    color: #c4c4c4;
    background: #282828;
}
.switches i.dim {
    color: #6a6a6a;
}
.switches svg {
    display: block;
    width: 13px;
    height: 13px;
}
.flags {
    flex: none;
    display: flex;
    gap: 2px;
    margin-left: 32px;
}
.flags i {
    display: block;
    width: 13px;
    height: 13px;
    background: #282828;
}
.spiral {
    flex: none;
    width: 13px;
    height: 13px;
    margin-left: 19px;
    color: #a0a0a0;
}
.parent {
    flex: none;
    display: flex;
    align-items: center;
    justify-content: space-between;
    width: 89px;
    height: 17px;
    margin-left: 6px;
    padding: 0 5px 0 7px;
    background: #1d1d1d;
    color: #b5b5b5;
    font-size: 12px;
}
.group-name {
    margin-left: 6px;
    color: #7d7d7d;
    width: 155px;
}
.opacity-name {
    margin-left: 42px;
    color: #8e8e8e;
    font-size: 11px;
}
.twirl {
    margin-left: 7px;
    width: 17px;
    color: #777;
}
.mask-swatch {
    flex: none;
    width: 10px;
    height: 13px;
    background: #f09a0a;
}
.mask-name {
    width: 118px;
    margin-left: 8px;
    color: #8a8a8a;
}
.mode {
    display: flex;
    align-items: center;
    justify-content: space-between;
    flex: none;
    width: 63px;
    height: 18px;
    padding: 0 5px 0 7px;
    border: 1px solid #3b3b3b;
    background: #1d1d1d;
    color: #b5b5b5;
    font-size: 12px;
}
.invert {
    flex: none;
    width: 14px;
    height: 14px;
    margin-left: 5px;
    background: #1d1d1d;
}
.invert-label {
    margin-left: 3px;
    color: #6f8a9a;
    font-size: 11px;
}
.reset {
    color: #2d8ceb;
    font-size: 11px;
    text-decoration: underline;
}
.tracks {
    flex: 1;
    min-width: 0;
    position: relative;
    background: #232323;
}
.nav-bar {
    height: 10px;
    margin-left: 7px;
    background: #6e6e6e;
    border-bottom: 1px solid #000;
    position: relative;
}
.nav-handle {
    position: absolute;
    left: -7px;
    top: 0;
    width: 7px;
    height: 9px;
    border-radius: 4px 0 0 4px;
    background: #2d8ceb;
}
.time-ruler {
    display: flex;
    height: 20px;
    padding-left: 8px;
    border-bottom: 1px solid #000;
    color: #8f8f8f;
    font-size: 10px;
}
.time-ruler span {
    flex: none;
    width: 86.500px;
    text-align: center;
    position: relative;
}
.time-ruler span:first-child {
    width: 43px;
    text-align: left;
}
.time-ruler span:not(:first-child)::after {
    content: "";
    position: absolute;
    left: 50%;
    bottom: 1px;
    width: 1px;
    height: 5px;
    background: #888;
}
.work-bar {
    height: 16px;
    margin-left: 7px;
    background: #5f5f5f;
    position: relative;
}
.work-handle {
    position: absolute;
    left: -7px;
    top: 0;
    width: 7px;
    height: 15px;
    border-radius: 4px 0 0 4px;
    background: #2d8ceb;
}
.green-bar {
    height: 4px;
    margin-left: 7px;
    background: #17b117;
}
.track {
    height: 20px;
    padding: 1px 0 0 8px;
    border-bottom: 1px solid #1e1e1e;
    background: #2c2c2c;
    position: relative;
}
.track-selected {
    background: #3a3a3a;
}
.clip-bar {
    display: block;
    height: 16px;
    background: #73727f;
    border-bottom: 2px solid #5b5a66;
}
.clip-noise {
    background: repeating-linear-gradient(90deg, #8f8fac 0 2px, #9494b0 2px 3px, #8b8ba8 3px 5px);
    border-top: 1px solid #d8d8e4;
    border-bottom: 0;
}
.clip-bg {
    background: #525b8a;
    border-bottom-color: #444b70;
}
.key {
    position: absolute;
    left: 4px;
    top: 3px;
    width: 6px;
    height: 11px;
    border-top: 1px solid #ccc;
    border-bottom: 1px solid #ccc;
    z-index: 1;
}
.playhead {
    position: absolute;
    left: 7px;
    top: 20px;
    bottom: 0;
    width: 1px;
    background: #2d8ceb;
}
.cti {
    position: absolute;
    left: 2px;
    top: 15px;
}

/* screenshot annotations drawn over the app */
.marks {
    position: absolute;
    left: 0;
    top: 0;
    pointer-events: none;
}
.note {
    position: absolute;
    white-space: nowrap;
    color: #f00;
    font-family: "Noto Sans CJK SC", sans-serif;
    font-weight: 500;
    text-shadow: 1px 0 0 #100, -1px 0 0 #100, 0 1px 0 #100, 0 -1px 0 #100, 1px 1px 0 #100;
}
.note b {
    font-family: "Liberation Sans", sans-serif;
    font-weight: 700;
}
.note-two {
    left: 138px;
    top: 43px;
    font-size: 29px;
    letter-spacing: 2.400px;
    line-height: 38px;
}
.note-line {
    margin-left: 1px;
}
.note-three {
    left: 37px;
    top: 312px;
    font-size: 24px;
    letter-spacing: 1.600px;
    line-height: 31px;
}
.note-one {
    left: 80px;
    top: 725px;
    font-size: 29px;
    letter-spacing: 2.400px;
    line-height: 40px;
}
.note-four {
    left: 315px;
    top: 821px;
    color: #f0b429;
    font-size: 24px;
    letter-spacing: 1.400px;
    line-height: 36px;
}
```
